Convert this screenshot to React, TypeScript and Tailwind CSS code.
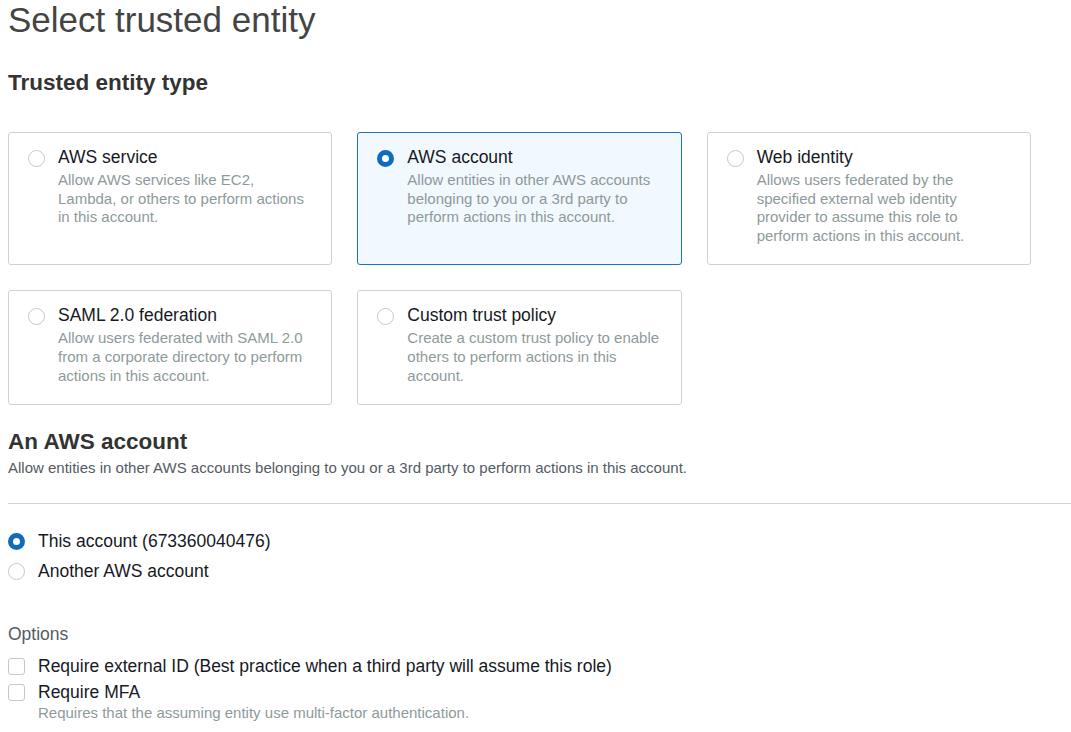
import React from "react";

type Entity = { title: string; desc: string; selected?: boolean };

const row1: Entity[] = [
  { title: "AWS service", desc: "Allow AWS services like EC2, Lambda, or others to perform actions in this account." },
  { title: "AWS account", desc: "Allow entities in other AWS accounts belonging to you or a 3rd party to perform actions in this account.", selected: true },
  { title: "Web identity", desc: "Allows users federated by the specified external web identity provider to assume this role to perform actions in this account." },
];
const row2: Entity[] = [
  { title: "SAML 2.0 federation", desc: "Allow users federated with SAML 2.0 from a corporate directory to perform actions in this account." },
  { title: "Custom trust policy", desc: "Create a custom trust policy to enable others to perform actions in this account." },
];

function Radio({ checked }: { checked?: boolean }) {
  return checked ? (
    <span className="block w-[17px] h-[17px] rounded-full border-[5px] border-[#0f6cbd] bg-white shrink-0" />
  ) : (
    <span className="block w-[17px] h-[17px] rounded-full border border-[#c3c8cc] bg-white shrink-0" />
  );
}

function Card({ e }: { e: Entity }) {
  return (
    <div
      className={
        e.selected
          ? "border border-[#1a73c2] bg-[#f1f8fe] rounded-[3px] pl-[19px] pt-[14px] pb-[19px] flex items-start gap-[13px]"
          : "border border-[#cdd2d6] bg-white rounded-[3px] pl-[19px] pt-[14px] pb-[19px] flex items-start gap-[13px]"
      }
    >
      <div className="mt-[3px]">
        <Radio checked={e.selected} />
      </div>
      <div className="flex flex-col w-[254px]">
        <div className="text-[17.5px] leading-[21px] text-[#16191f]">{e.title}</div>
        <div className="mt-[3px] text-[15px] leading-[18.6px] text-[#8e9a9b]">{e.desc}</div>
      </div>
    </div>
  );
}

export default function App() {
  return (
    <div
      className="bg-white min-h-[732px] pl-[8px] overflow-hidden"
      style={{ fontFamily: '"Liberation Sans", Arial, sans-serif' }}
    >
      <h1 className="text-[35px] leading-[40px] text-[#444444] font-normal">Select trusted entity</h1>
      <h2 className="mt-[29px] text-[22.5px] leading-[28px] font-bold text-[#333333]">Trusted entity type</h2>

      <div className="mt-[35px] w-[1023px] grid grid-cols-3 gap-x-[25px] gap-y-[25px]">
        {row1.map((e) => (
          <Card key={e.title} e={e} />
        ))}
        {row2.map((e) => (
          <Card key={e.title} e={e} />
        ))}
      </div>

      <h2 className="mt-[23px] text-[22.5px] leading-[28px] font-bold text-[#333333]">An AWS account</h2>
      <p className="mt-[2px] text-[15px] leading-[20px] text-[#545b64]">
        Allow entities in other AWS accounts belonging to you or a 3rd party to perform actions in this account.
      </p>

      <div className="mt-[25px] h-px bg-[#d3d6d9]" />

      <div className="mt-[27px] flex flex-col gap-[10px]">
        <div className="flex items-center gap-[13px] h-[20px]">
          <Radio checked />
          <span className="text-[17.5px] leading-[20px] text-[#16191f]">This account (673360040476)</span>
        </div>
        <div className="flex items-center gap-[13px] h-[20px]">
          <Radio />
          <span className="text-[17.5px] leading-[20px] text-[#16191f]">Another AWS account</span>
        </div>
      </div>

      <div className="mt-[43px] text-[17.5px] leading-[20px] text-[#545b64]">Options</div>

      <div className="mt-[12px] flex flex-col gap-[6px]">
        <div className="flex items-center gap-[13px] h-[20px]">
          <span className="block w-[17px] h-[17px] rounded-[3px] border border-[#c3c8cc] bg-white shrink-0" />
          <span className="text-[17.5px] leading-[20px] text-[#16191f]">
            Require external ID (Best practice when a third party will assume this role)
          </span>
        </div>
        <div className="flex items-center gap-[13px] h-[20px]">
          <span className="block w-[17px] h-[17px] rounded-[3px] border border-[#c3c8cc] bg-white shrink-0" />
          <span className="text-[17.5px] leading-[20px] text-[#16191f]">Require MFA</span>
        </div>
      </div>
      <div className="mt-[2px] pl-[30px] text-[15px] leading-[18px] text-[#8e9a9b]">
        Requires that the assuming entity use multi-factor authentication.
      </div>
    </div>
  );
}
